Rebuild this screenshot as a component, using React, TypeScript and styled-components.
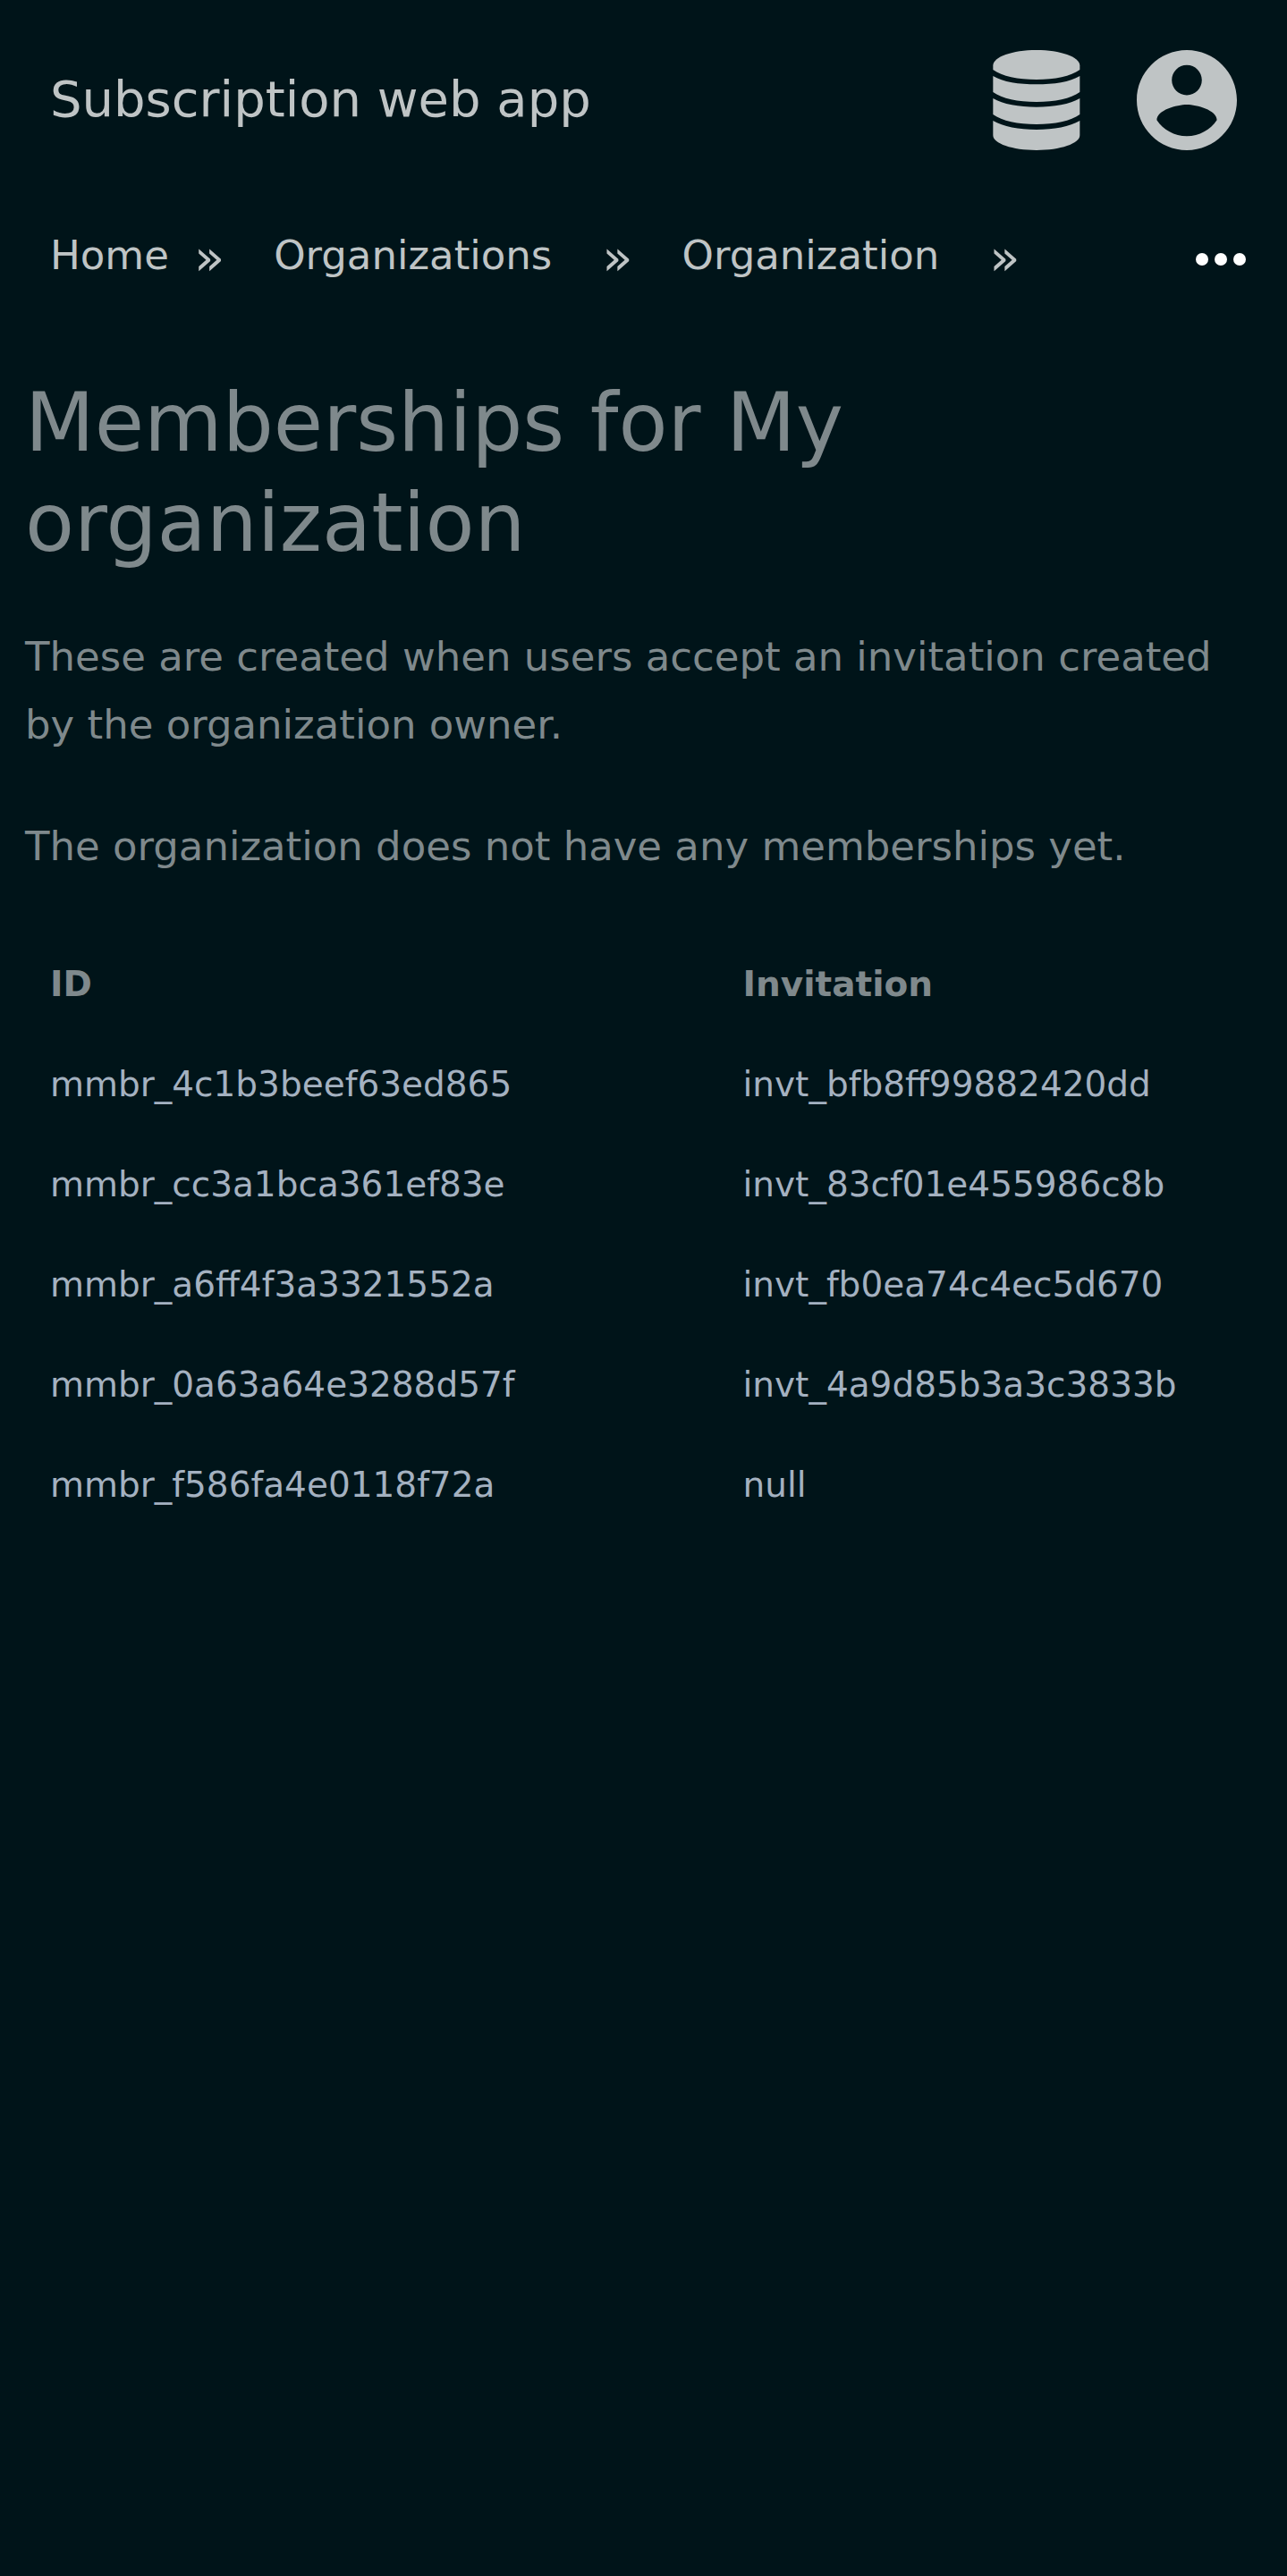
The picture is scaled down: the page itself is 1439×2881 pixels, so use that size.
import React from "react";
import styled, { createGlobalStyle } from "styled-components";

const GlobalStyle = createGlobalStyle`
  *, *::before, *::after { box-sizing: border-box; }
  body {
    margin: 0;
    background: #001419;
    color: #7f898c;
    font-family: "DejaVu Sans", sans-serif;
    font-size: 45px;
    line-height: 76px;
  }
`;

const Header = styled.header`
  display: flex;
  align-items: flex-start;
  justify-content: space-between;
  padding: 56px;
`;

const Brand = styled.a`
  color: #bfc4c5;
  font-size: 56px;
  line-height: 110px;
  text-decoration: none;
`;

const Actions = styled.div`
  display: flex;
  gap: 56px;
`;

const IconButton = styled.button<{ $color?: string }>`
  display: flex;
  align-items: center;
  justify-content: center;
  padding: 0;
  border: 0;
  background: none;
  color: ${(p) => p.$color ?? "#bfc4c5"};
  cursor: pointer;
`;

const Icon = styled.svg<{ $size: number }>`
  display: block;
  width: ${(p) => p.$size}px;
  height: ${(p) => p.$size}px;
  fill: currentColor;
`;

const Breadcrumbs = styled.nav`
  display: flex;
  align-items: center;
  justify-content: space-between;
  padding: 24px 46px 0 56px;
`;

const Crumbs = styled.ol`
  display: flex;
  margin: 0;
  padding: 0;
  list-style: none;
`;

const Crumb = styled.li<{ $gap: number }>`
  display: flex;
  align-items: flex-start;
  gap: ${(p) => p.$gap}px;
  margin-right: 55px;
`;

const CrumbLink = styled.a`
  color: #bfc4c5;
  text-decoration: none;
`;

const Separator = styled.span`
  padding-top: 2px;
  color: #bfc4c5;
  font-size: 56px;
`;

const Main = styled.main`
  padding: 91px 28px 0;
`;

const Title = styled.h1`
  margin: 0 0 56px;
  font-size: 90px;
  font-weight: 400;
  line-height: 112px;
`;

const Text = styled.p`
  margin: 0 0 60px;
`;

const Table = styled.table`
  width: 100%;
  border-collapse: collapse;
  table-layout: fixed;
  font-size: 39px;
  line-height: 56px;
`;

const HeadCell = styled.th<{ $width: string }>`
  width: ${(p) => p.$width};
  padding: 28px;
  text-align: left;
`;

const Cell = styled.td`
  padding: 28px;
  color: #a4b1c0;
`;

const rows = [
  ["mmbr_4c1b3beef63ed865", "invt_bfb8ff99882420dd"],
  ["mmbr_cc3a1bca361ef83e", "invt_83cf01e455986c8b"],
  ["mmbr_a6ff4f3a3321552a", "invt_fb0ea74c4ec5d670"],
  ["mmbr_0a63a64e3288d57f", "invt_4a9d85b3a3c3833b"],
  ["mmbr_f586fa4e0118f72a", "null"],
];

const crumbs = [
  { label: "Home", gap: 28 },
  { label: "Organizations", gap: 56 },
  { label: "Organization", gap: 56 },
];

const DatabaseIcon = () => (
  <Icon $size={112} viewBox="-22 0 336 336" aria-hidden="true">
    <path d="M0 52C0 23 65 0 145.500 0S291 23 291 52V66C261 88 207 99 145.500 99S30 88 0 66Z" />
    <path d="M0 87C33 107 87 115 145.500 115S258 107 291 87V141C261 163 207 174 145.500 174S30 163 0 141Z" />
    <path d="M0 162C33 182 87 191 145.500 191S258 182 291 162V216C261 238 207 249 145.500 249S30 238 0 216Z" />
    <path d="M0 237C33 257 87 267 145.500 267S258 257 291 237V286C291 314 226 336 145.500 336S0 314 0 286Z" />
  </Icon>
);

const AccountIcon = () => (
  <Icon $size={112} viewBox="2 2 20 20" aria-hidden="true">
    <path d="M12 2C6.480 2 2 6.480 2 12s4.480 10 10 10 10-4.480 10-10S17.520 2 12 2zm0 3c1.660 0 3 1.340 3 3s-1.340 3-3 3-3-1.340-3-3 1.340-3 3-3zm0 14.200c-2.500 0-4.710-1.280-6-3.220.030-1.990 4-3.080 6-3.080 1.990 0 5.970 1.090 6 3.080-1.290 1.940-3.500 3.220-6 3.220z" />
  </Icon>
);

const MoreIcon = () => (
  <Icon $size={56} viewBox="0 0 56 56" aria-hidden="true">
    <circle cx="7" cy="31" r="7" />
    <circle cx="28" cy="31" r="7" />
    <circle cx="49" cy="31" r="7" />
  </Icon>
);

export default function App() {
  return (
    <>
      <GlobalStyle />
      <Header>
        <Brand href="#">Subscription web app</Brand>
        <Actions>
          <IconButton type="button" aria-label="Data">
            <DatabaseIcon />
          </IconButton>
          <IconButton type="button" aria-label="Account">
            <AccountIcon />
          </IconButton>
        </Actions>
      </Header>
      <Breadcrumbs aria-label="Breadcrumb">
        <Crumbs>
          {crumbs.map((c) => (
            <Crumb key={c.label} $gap={c.gap}>
              <CrumbLink href="#">{c.label}</CrumbLink>
              <Separator aria-hidden="true">»</Separator>
            </Crumb>
          ))}
        </Crumbs>
        <IconButton type="button" $color="#ffffff" aria-label="More">
          <MoreIcon />
        </IconButton>
      </Breadcrumbs>
      <Main>
        <Title>Memberships for My organization</Title>
        <Text>
          These are created when users accept an invitation created by the
          organization owner.
        </Text>
        <Text>The organization does not have any memberships yet.</Text>
        <Table>
          <thead>
            <tr>
              <HeadCell scope="col" $width="56%">ID</HeadCell>
              <HeadCell scope="col" $width="44%">Invitation</HeadCell>
            </tr>
          </thead>
          <tbody>
            {rows.map(([id, invitation]) => (
              <tr key={id}>
                <Cell>{id}</Cell>
                <Cell>{invitation}</Cell>
              </tr>
            ))}
          </tbody>
        </Table>
      </Main>
    </>
  );
}
